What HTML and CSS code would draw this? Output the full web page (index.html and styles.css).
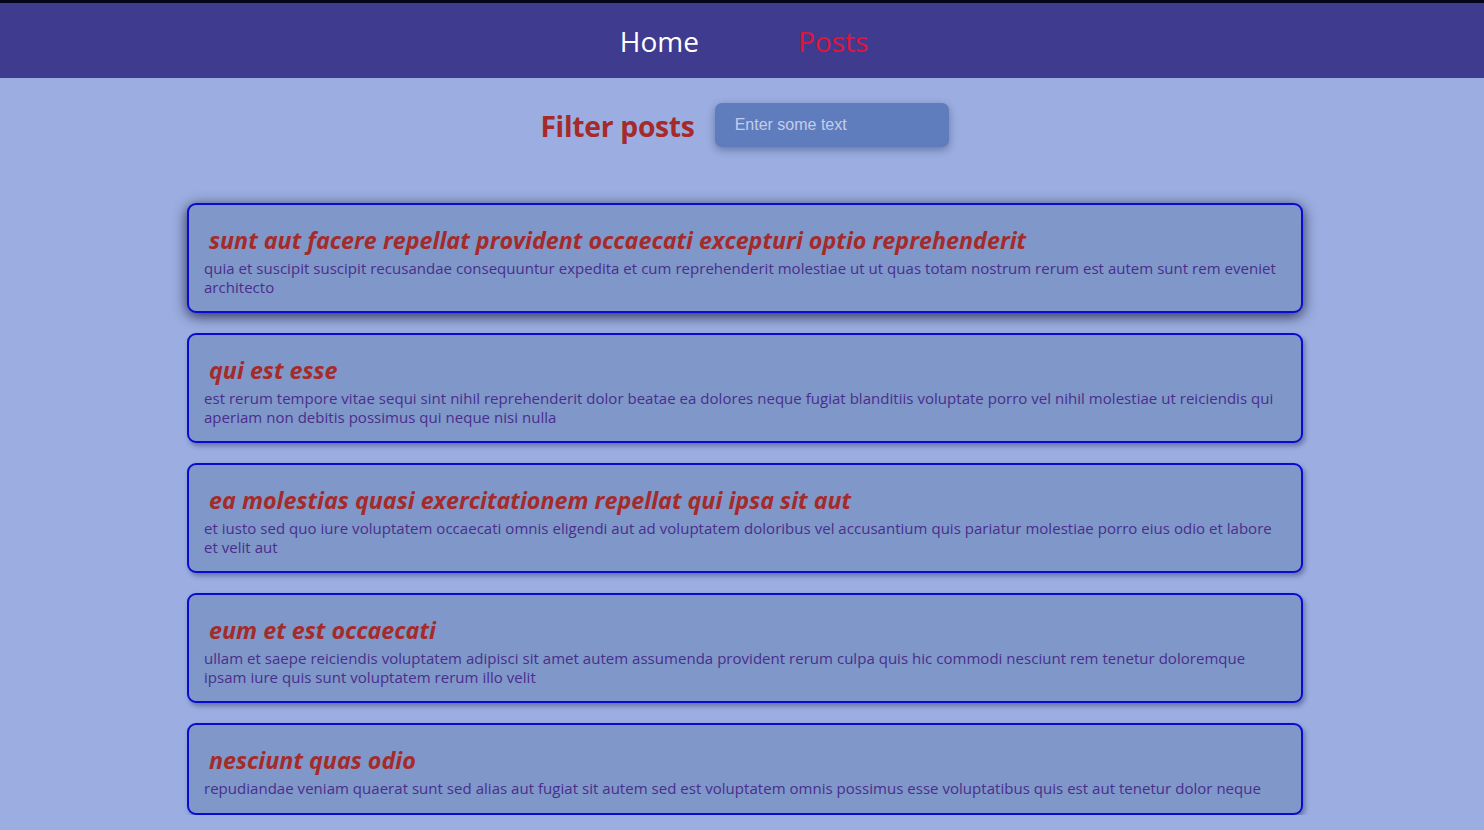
FILE: index.html
```html
<!DOCTYPE html>
<html lang="en">
<head>
<meta charset="utf-8">
<title>Posts</title>
<link rel="stylesheet" href="styles.css">
</head>
<body>
<header class="topbar">
  <nav class="nav">
    <a class="nav-link" href="#">Home</a>
    <a class="nav-link active" href="#">Posts</a>
  </nav>
</header>
<main class="page">
  <div class="filter">
    <h2 class="filter-title">Filter posts</h2>
    <input class="filter-input" type="text" placeholder="Enter some text">
  </div>
  <section class="posts">
    <article class="post hovered">
      <h3 class="post-title">sunt aut facere repellat provident occaecati excepturi optio reprehenderit</h3>
      <p class="post-body">quia et suscipit suscipit recusandae consequuntur expedita et cum reprehenderit molestiae ut ut quas totam nostrum rerum est autem sunt rem eveniet architecto</p>
    </article>
    <article class="post">
      <h3 class="post-title">qui est esse</h3>
      <p class="post-body">est rerum tempore vitae sequi sint nihil reprehenderit dolor beatae ea dolores neque fugiat blanditiis voluptate porro vel nihil molestiae ut reiciendis qui aperiam non debitis possimus qui neque nisi nulla</p>
    </article>
    <article class="post">
      <h3 class="post-title">ea molestias quasi exercitationem repellat qui ipsa sit aut</h3>
      <p class="post-body">et iusto sed quo iure voluptatem occaecati omnis eligendi aut ad voluptatem doloribus vel accusantium quis pariatur molestiae porro eius odio et labore et velit aut</p>
    </article>
    <article class="post">
      <h3 class="post-title">eum et est occaecati</h3>
      <p class="post-body">ullam et saepe reiciendis voluptatem adipisci sit amet autem assumenda provident rerum culpa quis hic commodi nesciunt rem tenetur doloremque ipsam iure quis sunt voluptatem rerum illo velit</p>
    </article>
    <article class="post">
      <h3 class="post-title">nesciunt quas odio</h3>
      <p class="post-body">repudiandae veniam quaerat sunt sed alias aut fugiat sit autem sed est voluptatem omnis possimus esse voluptatibus quis est aut tenetur dolor neque</p>
    </article>
  </section>
</main>
</body>
</html>
```

FILE: styles.css
```css
* { box-sizing: border-box; }

html, body {
  margin: 0;
  padding: 0;
}

body {
  background: #9caee1;
  font-family: "Open Sans", "Noto Sans", sans-serif;
  overflow: hidden;
}

.topbar {
  background: #3f3b8f;
  border-top: 3px solid #05051a;
  height: 78px;
  display: flex;
  justify-content: center;
  align-items: center;
}

.nav {
  display: flex;
  gap: 99px;
  padding-left: 4px;
}

.nav-link {
  font-family: "Open Sans", sans-serif;
  font-size: 28px;
  color: #ffffff;
  text-decoration: none;
}

.nav-link.active {
  color: #e0143c;
}

.page {
  display: flex;
  flex-direction: column;
  align-items: center;
}

.filter {
  display: flex;
  align-items: center;
  gap: 20px;
  margin-top: 25px;
  height: 44px;
  padding-left: 5px;
}

.filter-title {
  margin: 0;
  padding-top: 2px;
  font-size: 28.3px;
  font-weight: 700;
  color: #a52a2a;
  letter-spacing: -0.3px;
}

.filter-input {
  width: 234px;
  height: 44px;
  border: none;
  border-radius: 7px;
  background: #5f7dbd;
  box-shadow: 0 3px 8px rgba(40, 50, 100, 0.45);
  padding: 0 20px;
  font-family: "Liberation Sans", Arial, sans-serif;
  font-size: 16px;
  color: #fff;
  outline: none;
}

.filter-input::placeholder {
  color: #c3cdea;
}

.posts {
  margin-top: 56px;
  width: 1116px;
  margin-left: 6px;
  display: flex;
  flex-direction: column;
  gap: 20px;
}

.post {
  background: #7f97c9;
  border: 2px solid #0a0ad2;
  border-radius: 9px;
  padding: 19px 18px 15px 15px;
  box-shadow: 2px 3px 5px rgba(40, 45, 90, 0.45);
}

.post.hovered {
  box-shadow: 0 3px 14px rgba(20, 20, 50, 0.85);
}

.post-title {
  margin: 0 0 3px 5px;
  font-size: 23.3px;
  line-height: 32px;
  font-weight: 700;
  font-style: italic;
  color: #a52a2a;
}

.post-body {
  margin: 0;
  font-size: 15px;
  line-height: 18.5px;
  letter-spacing: 0.03px;
  color: #4a2e8c;
}
```
